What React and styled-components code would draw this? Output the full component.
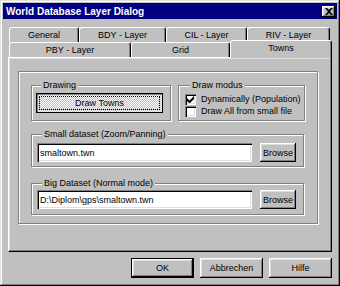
import styled, { createGlobalStyle } from "styled-components";

const GlobalStyle = createGlobalStyle`
  html, body {
    margin: 0;
    padding: 0;
    background: #c0c0c0;
  }
  body {
    font-family: "Liberation Sans", Arial, sans-serif;
    font-size: 9px;
    color: #000;
  }
`;

const raised = `
  box-shadow: inset -1px -1px #000, inset 1px 1px #fff,
    inset -2px -2px #808080, inset 2px 2px #dfdfdf;
`;

const etched = `
  border: 1px solid #808080;
  box-shadow: inset 1px 1px #fff, 1px 1px #fff;
`;

const Window = styled.div`
  width: 340px;
  height: 286px;
  box-sizing: border-box;
  padding: 3px;
  background: #c0c0c0;
  box-shadow: inset -1px -1px #000, inset 1px 1px #dfdfdf,
    inset -2px -2px #808080, inset 2px 2px #fff;
  display: flex;
  flex-direction: column;
`;

const TitleBar = styled.div`
  height: 16px;
  background: #000080;
  color: #fff;
  font-weight: bold;
  font-size: 10px;
  padding: 0 2px 0 3px;
  display: flex;
  align-items: center;
  justify-content: space-between;
`;

const CloseButton = styled.div`
  width: 13px;
  height: 11px;
  box-sizing: border-box;
  background: #c0c0c0;
  ${raised}
  display: flex;
  align-items: center;
  justify-content: center;
`;

const Body = styled.div`
  padding: 8px 5px 0;
  display: flex;
  flex-direction: column;
`;

const TabStrip = styled.div`
  padding-left: 1px;
  display: flex;
  flex-direction: column;
`;

const TabRow = styled.div`
  display: flex;
  align-items: flex-end;
  height: 15px;
`;

const Tab = styled.div`
  width: ${(p) => p.$w}px;
  height: ${(p) => (p.$active ? 18 : 15)}px;
  margin-bottom: ${(p) => (p.$active ? -1 : 0)}px;
  position: ${(p) => (p.$active ? "relative" : "static")};
  z-index: ${(p) => (p.$active ? 1 : 0)};
  box-sizing: border-box;
  background: #c0c0c0;
  border-top: 1px solid #fff;
  border-left: 1px solid #fff;
  border-right: 1px solid #000;
  border-radius: 3px 3px 0 0;
  box-shadow: inset -1px 0 #808080;
  display: flex;
  align-items: ${(p) => (p.$active ? "flex-start" : "center")};
  padding-top: ${(p) => (p.$active ? 2 : 0)}px;
  justify-content: center;
  white-space: nowrap;
`;

const Panel = styled.div`
  height: 195px;
  box-sizing: border-box;
  border-top: 1px solid #fff;
  border-left: 1px solid #fff;
  border-right: 1px solid #000;
  border-bottom: 1px solid #000;
  box-shadow: inset -1px -1px #808080, inset 1px 1px #dfdfdf;
  padding: 13px 0 0 9px;
`;

const Frame = styled.div`
  width: 300px;
  height: 153px;
  box-sizing: border-box;
  ${etched}
  padding: 8px 0 0 12px;
  display: flex;
  flex-direction: column;
`;

const GroupRow = styled.div`
  display: flex;
  gap: 7px;
`;

const Group = styled.fieldset`
  margin: ${(p) => p.$top || 0}px 0 0;
  width: ${(p) => p.$w}px;
  height: ${(p) => p.$h}px;
  box-sizing: border-box;
  min-width: 0;
  ${etched}
  padding: ${(p) => p.$pt || 0}px 0 0 ${(p) => p.$pl || 0}px;
`;

const Legend = styled.legend`
  margin-left: 5px;
  padding: 0 2px;
  line-height: 11px;
  font-size: 9px;
  background: #c0c0c0;
`;

const ToggleButton = styled.div`
  width: 127px;
  height: 20px;
  box-sizing: border-box;
  border: 1px solid #000;
  box-shadow: inset 1px 1px #808080;
  background: repeating-conic-gradient(#fff 0 25%, #c0c0c0 0 50%) 0 0 / 2px
    2px;
  display: flex;
  align-items: center;
  justify-content: center;
  outline: 1px dotted #000;
  outline-offset: -4px;
`;

const CheckRow = styled.label`
  display: flex;
  align-items: center;
  gap: 5px;
  height: 12px;
`;

const CheckBox = styled.span`
  width: 11px;
  height: 11px;
  box-sizing: border-box;
  background: #fff;
  box-shadow: inset 1px 1px #808080, inset 2px 2px #000,
    inset -1px -1px #fff, inset -2px -2px #dfdfdf;
  display: flex;
  align-items: center;
  justify-content: center;
`;

const FieldRow = styled.div`
  display: flex;
  align-items: center;
  gap: 8px;
`;

const Field = styled.input`
  width: 215px;
  height: 19px;
  box-sizing: border-box;
  border: none;
  outline: none;
  margin: 0;
  padding: 0 3px;
  background: #fff;
  box-shadow: inset 1px 1px #808080, inset 2px 2px #000,
    inset -1px -1px #fff, inset -2px -2px #dfdfdf;
  font-family: "Liberation Sans", Arial, sans-serif;
  font-size: 9px;
  color: #000;
`;

const Button = styled.button`
  width: ${(p) => p.$w}px;
  height: ${(p) => p.$h || 20}px;
  box-sizing: border-box;
  margin: 0;
  padding: 0;
  background: #c0c0c0;
  border: ${(p) => (p.$default ? "1px solid #000" : "none")};
  ${raised}
  font-family: "Liberation Sans", Arial, sans-serif;
  font-size: 9px;
  color: #000;
`;

const ButtonRow = styled.div`
  display: flex;
  justify-content: flex-end;
  gap: 6px;
  margin-top: 6px;
`;

const Check = () => (
  <svg width="7" height="7" viewBox="0 0 7 7">
    <path d="M0 2v3l2 2h1l4-4V0L2.5 4.5z" fill="#000" />
  </svg>
);

const CloseX = () => (
  <svg width="8" height="7" viewBox="0 0 8 7">
    <path
      d="M0 0h2l2 2 2-2h2L5 3.5 8 7H6L4 5 2 7H0l3-3.5z"
      fill="#000"
    />
  </svg>
);

const backTabs = [
  ["General", 70],
  ["BDY - Layer", 87],
  ["CIL - Layer", 81],
  ["RIV - Layer", 83],
];

const frontTabs = [
  ["PBY - Layer", 122],
  ["Grid", 99],
  ["Towns", 102, true],
];

export default function App() {
  return (
    <>
      <GlobalStyle />
      <Window>
        <TitleBar>
          <span>World Database Layer Dialog</span>
          <CloseButton>
            <CloseX />
          </CloseButton>
        </TitleBar>
        <Body>
          <TabStrip>
            <TabRow>
              {backTabs.map(([name, w]) => (
                <Tab key={name} $w={w}>
                  {name}
                </Tab>
              ))}
            </TabRow>
            <TabRow>
              {frontTabs.map(([name, w, active]) => (
                <Tab key={name} $w={w} $active={active}>
                  {name}
                </Tab>
              ))}
            </TabRow>
          </TabStrip>
          <Panel>
            <Frame>
              <GroupRow>
                <Group $w={140} $h={41} $pt={2} $pl={4}>
                  <Legend>Drawing</Legend>
                  <ToggleButton>Draw Towns</ToggleButton>
                </Group>
                <Group $w={127} $h={41} $pt={2} $pl={6}>
                  <Legend>Draw modus</Legend>
                  <CheckRow>
                    <CheckBox>
                      <Check />
                    </CheckBox>
                    Dynamically (Population)
                  </CheckRow>
                  <CheckRow>
                    <CheckBox />
                    Draw All from small file
                  </CheckRow>
                </Group>
              </GroupRow>
              <Group $top={8} $w={273} $h={38} $pt={3} $pl={5}>
                <Legend>Small dataset (Zoom/Panning)</Legend>
                <FieldRow>
                  <Field defaultValue="smaltown.twn" readOnly />
                  <Button $w={36} $h={19}>
                    Browse
                  </Button>
                </FieldRow>
              </Group>
              <Group $top={11} $w={273} $h={37} $pt={1} $pl={5}>
                <Legend>Big Dataset (Normal mode)</Legend>
                <FieldRow>
                  <Field defaultValue="D:\Diplom\gps\smaltown.twn" readOnly />
                  <Button $w={36} $h={19}>
                    Browse
                  </Button>
                </FieldRow>
              </Group>
            </Frame>
          </Panel>
          <ButtonRow>
            <Button $w={63} $default>
              OK
            </Button>
            <Button $w={63}>Abbrechen</Button>
            <Button $w={63}>Hilfe</Button>
          </ButtonRow>
        </Body>
      </Window>
    </>
  );
}
